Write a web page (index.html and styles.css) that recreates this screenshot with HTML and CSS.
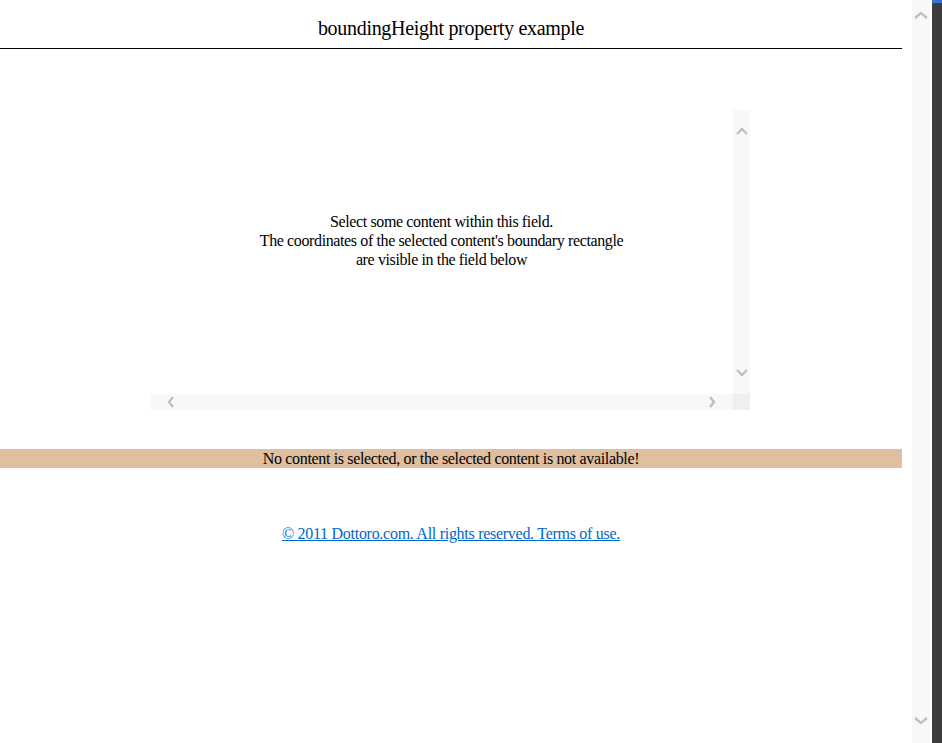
FILE: index.html
```html
<!DOCTYPE html>
<html>
<head>
<meta charset="utf-8">
<title>boundingHeight property example</title>
<link rel="stylesheet" href="styles.css">
</head>
<body>
<div class="window">
  <div class="main">
    <h1 class="title">boundingHeight property example</h1>
    <div class="field">
      <div class="field-row">
        <div class="field-content">
          Select some content within this field.<br>
          The coordinates of the selected content's boundary rectangle<br>
          are visible in the field below
        </div>
        <div class="vbar">
          <svg class="chev" width="14" height="10" viewBox="0 0 14 10"><polyline points="2,8 7,3 12,8" fill="none" stroke="#bfbfbf" stroke-width="2.4"/></svg>
          <svg class="chev" width="14" height="10" viewBox="0 0 14 10"><polyline points="2,2 7,7 12,2" fill="none" stroke="#bfbfbf" stroke-width="2.4"/></svg>
        </div>
      </div>
      <div class="field-row">
        <div class="hbar">
          <svg class="chev" width="10" height="14" viewBox="0 0 10 14"><polyline points="7,2 3,7 7,12" fill="none" stroke="#bfbfbf" stroke-width="2.4"/></svg>
          <svg class="chev" width="10" height="14" viewBox="0 0 10 14"><polyline points="3,2 7,7 3,12" fill="none" stroke="#bfbfbf" stroke-width="2.4"/></svg>
        </div>
        <div class="corner"></div>
      </div>
    </div>
    <div class="status">No content is selected, or the selected content is not available!</div>
    <div class="footer"><a href="#">© 2011 Dottoro.com. All rights reserved. Terms of use.</a></div>
  </div>
  <div class="page-vbar">
    <svg class="chev" width="16" height="10" viewBox="0 0 16 10"><polyline points="2,8 8,3 14,8" fill="none" stroke="#bfbfbf" stroke-width="2.4"/></svg>
    <svg class="chev" width="16" height="10" viewBox="0 0 16 10"><polyline points="2,2 8,7 14,2" fill="none" stroke="#bfbfbf" stroke-width="2.4"/></svg>
  </div>
  <div class="edge"></div>
</div>
</body>
</html>
```
FILE: styles.css
```css
html, body {
  margin: 0;
  padding: 0;
  height: 743px;
  overflow: hidden;
  background: #ffffff;
}
body {
  font-family: "Liberation Serif", "Times New Roman", serif;
  font-size: 16px;
  color: #000;
}
.window {
  display: flex;
  height: 743px;
}
.main {
  width: 902px;
  flex: none;
}
.title {
  margin: 0;
  padding: 16px 0 8px;
  font-size: 20px;
  font-weight: normal;
  line-height: 24px;
  letter-spacing: -0.3px;
  text-align: center;
  border-bottom: 1px solid #000;
}
.field {
  width: 600px;
  margin: 61px 0 0 150px;
  display: flex;
  flex-direction: column;
}
.field-row {
  display: flex;
}
.field-content {
  width: 583px;
  height: 284px;
  box-sizing: border-box;
  padding-top: 102px;
  text-align: center;
  line-height: 19px;
  letter-spacing: -0.38px;
  background: #fff;
}
.vbar {
  width: 17px;
  height: 284px;
  background: #f8f8f8;
  display: flex;
  flex-direction: column;
  align-items: center;
  justify-content: space-between;
  padding: 16px 0 16px;
  box-sizing: border-box;
}
.hbar {
  width: 583px;
  height: 16px;
  background: #f8f8f8;
  display: flex;
  align-items: center;
  justify-content: space-between;
  padding: 0 16px 0 16px;
  box-sizing: border-box;
}
.corner {
  width: 17px;
  height: 16px;
  background: #efefef;
}
.chev {
  display: block;
}
.status {
  margin-top: 39px;
  height: 19px;
  line-height: 19px;
  letter-spacing: -0.34px;
  background: #e0bfa0;
  text-align: center;
}
.footer {
  margin-top: 56px;
  line-height: 19px;
  letter-spacing: -0.28px;
  text-align: center;
}
.footer a {
  color: #0066cc;
  text-decoration: underline;
}
.page-vbar {
  width: 18px;
  margin-left: 10px;
  background: #f8f8f8;
  display: flex;
  flex-direction: column;
  align-items: center;
  justify-content: space-between;
  padding: 10px 0 17px;
  box-sizing: border-box;
}
.edge {
  width: 10px;
  margin-left: 2px;
  background: #3d3d3d;
  border-top: 3px solid #3d6fd6;
  box-sizing: border-box;
}
```
